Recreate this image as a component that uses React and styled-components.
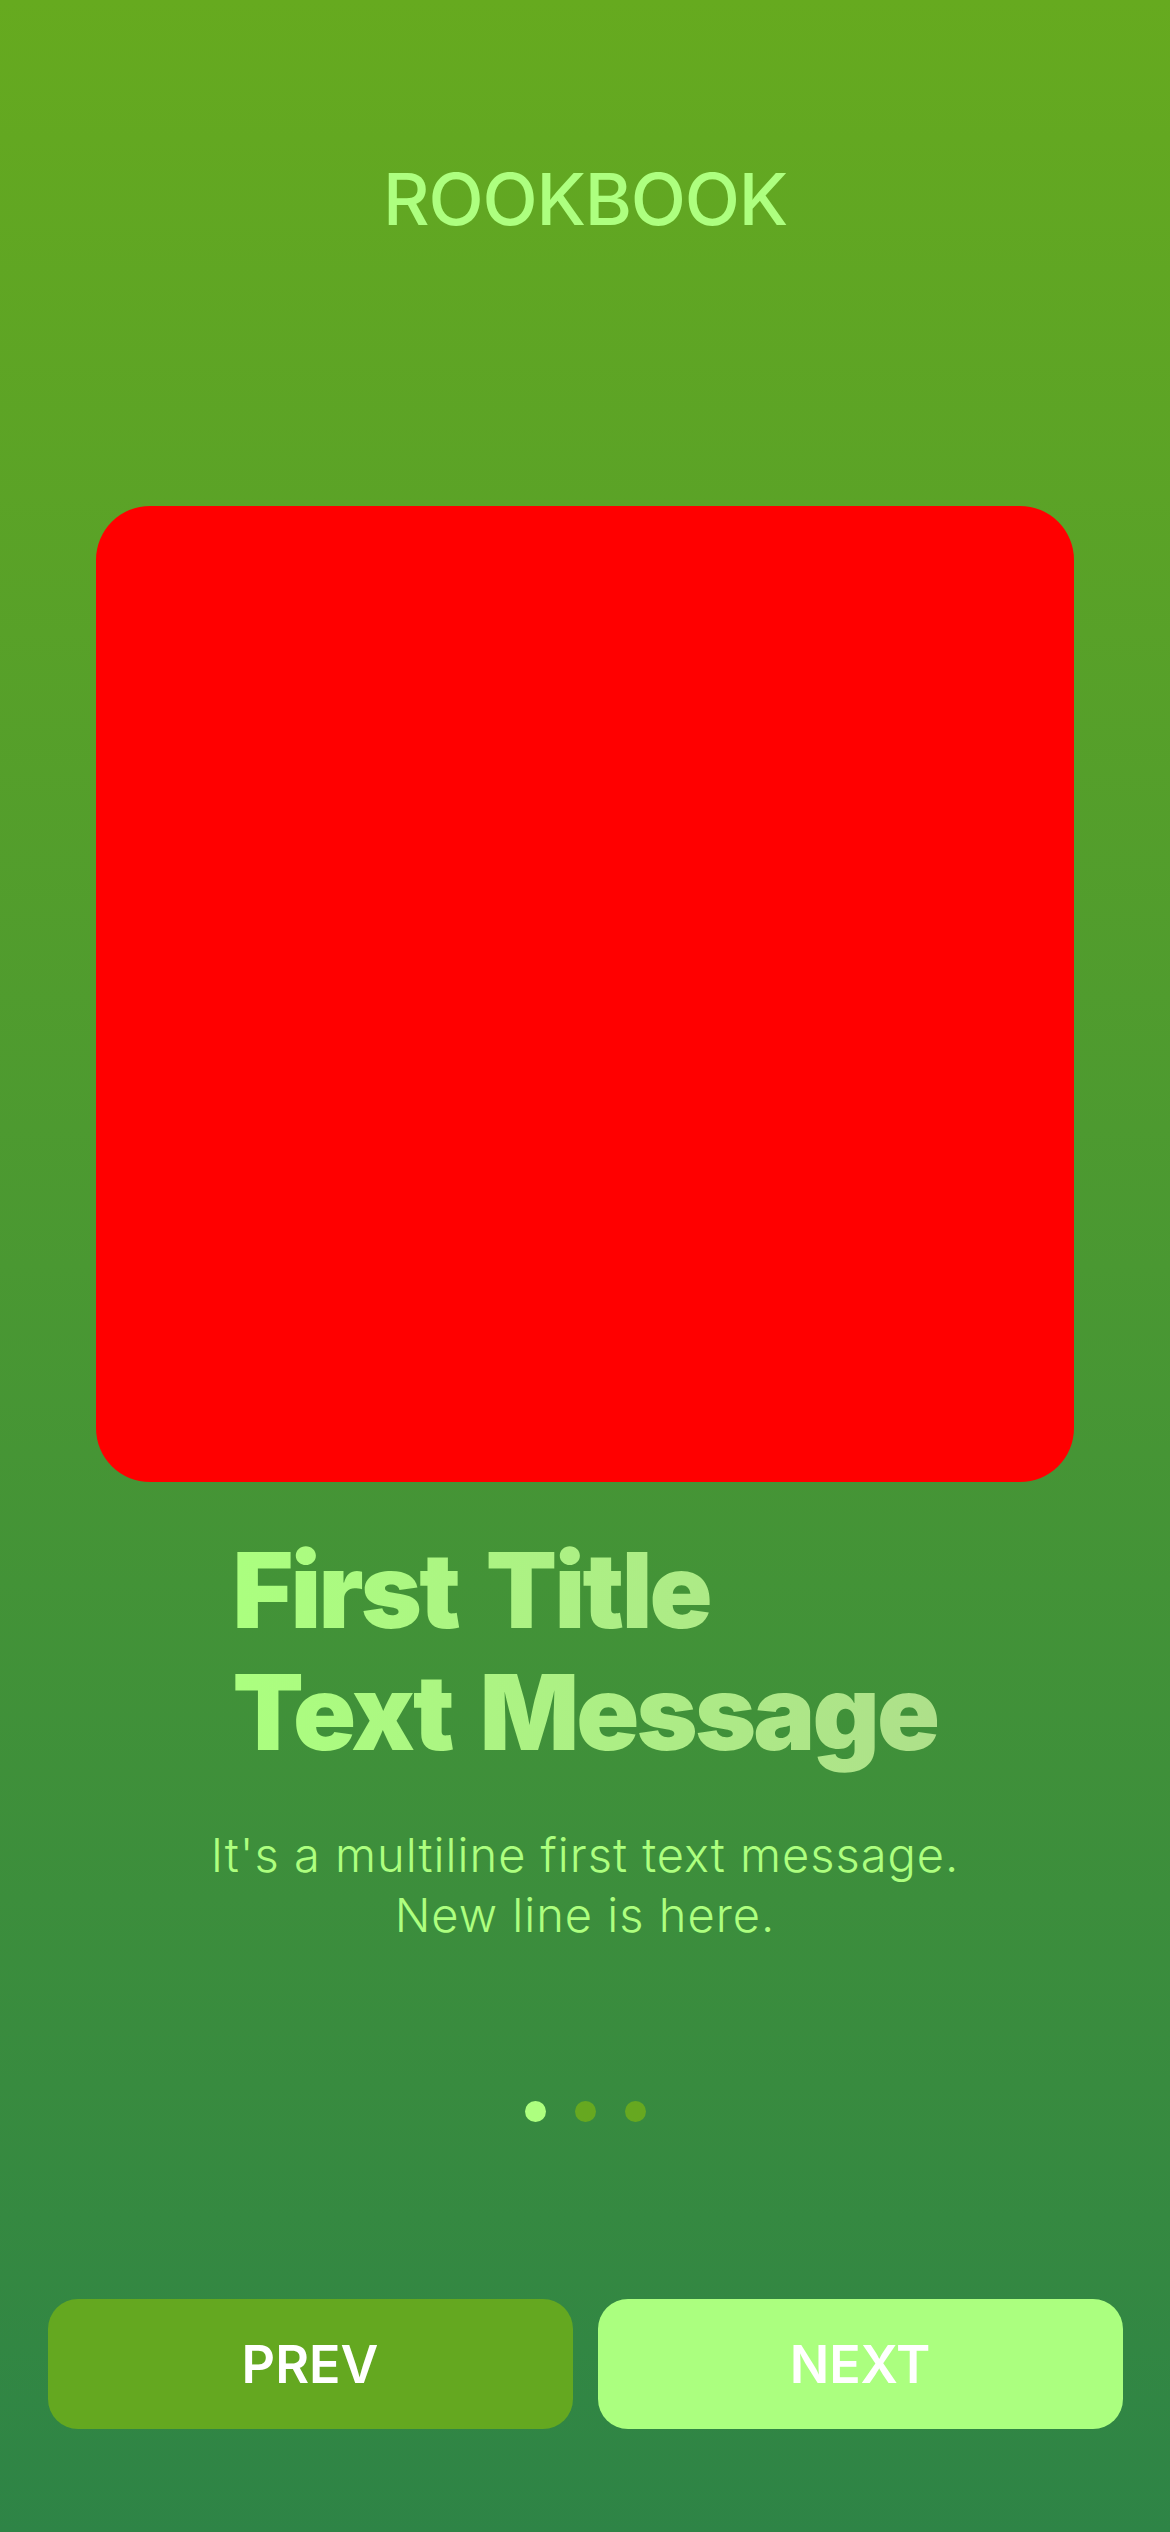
import React, { useState } from 'react';
import styled, { createGlobalStyle } from 'styled-components';

const GlobalStyle = createGlobalStyle`
  html, body {
    margin: 0;
    padding: 0;
  }
  body {
    font-family: Inter, "Noto Sans", sans-serif;
  }
`;

const Screen = styled.div`
  width: 1170px;
  height: 2532px;
  display: flex;
  flex-direction: column;
  align-items: center;
  background: linear-gradient(to bottom, #66aa1f 0%, #4a9832 50%, #2e8446 100%);
  overflow: hidden;
`;

const Brand = styled.h1`
  margin: 163px 0 0;
  font-size: 72px;
  line-height: 72px;
  font-weight: 500;
  color: #adff7f;
  letter-spacing: -1.2px;
`;

const Picture = styled.div`
  margin-top: 271px;
  width: 978px;
  height: 976px;
  border-radius: 54px;
  background: #ff0000;
`;

const Title = styled.h2`
  margin: 47px 0 0;
  width: fit-content;
  font-size: 104px;
  line-height: 122px;
  font-weight: 900;
  text-align: left;
  letter-spacing: -2.8px;
  word-spacing: 10px;
  background: linear-gradient(to right, #abff7f, #aee08a);
  -webkit-background-clip: text;
  background-clip: text;
  color: transparent;
`;

const Message = styled.p`
  margin: 52px 0 0;
  font-size: 47px;
  line-height: 60px;
  font-weight: 300;
  text-align: center;
  letter-spacing: 1px;
  color: #adff7f;
`;

const Dots = styled.div`
  margin-top: 156px;
  display: flex;
  gap: 29px;
`;

const Dot = styled.span`
  width: 21px;
  height: 21px;
  border-radius: 50%;
  background: ${({ $active }) => ($active ? '#adff7f' : '#66a820')};
`;

const Buttons = styled.div`
  margin-top: 177px;
  width: 1075px;
  display: grid;
  grid-template-columns: 1fr 1fr;
  gap: 25px;
`;

const NavButton = styled.button`
  height: 130px;
  border: none;
  border-radius: 30px;
  background: ${({ $primary }) => ($primary ? '#abff7f' : '#64a820')};
  color: #ffffff;
  font-family: Inter, "Noto Sans", sans-serif;
  font-size: 52px;
  font-weight: 600;
  cursor: pointer;
`;

const slides = [
  { title: ['First Title', 'Text Message'], text: ["It's a multiline first text message.", 'New line is here.'] },
  { title: ['Second Title', 'Text Message'], text: ["It's a multiline second text message.", 'New line is here.'] },
  { title: ['Third Title', 'Text Message'], text: ["It's a multiline third text message.", 'New line is here.'] },
];

const App = () => {
  const [page, setPage] = useState(0);
  const slide = slides[page];

  return (
    <Screen>
      <GlobalStyle />
      <Brand>ROOKBOOK</Brand>
      <Picture />
      <Title>
        {slide.title[0]}
        <br />
        {slide.title[1]}
      </Title>
      <Message>
        {slide.text[0]}
        <br />
        {slide.text[1]}
      </Message>
      <Dots>
        {slides.map((s, i) => (
          <Dot key={i} $active={i === page} />
        ))}
      </Dots>
      <Buttons>
        <NavButton onClick={() => setPage(Math.max(0, page - 1))}>PREV</NavButton>
        <NavButton $primary onClick={() => setPage(Math.min(slides.length - 1, page + 1))}>
          NEXT
        </NavButton>
      </Buttons>
    </Screen>
  );
};

export default App;
